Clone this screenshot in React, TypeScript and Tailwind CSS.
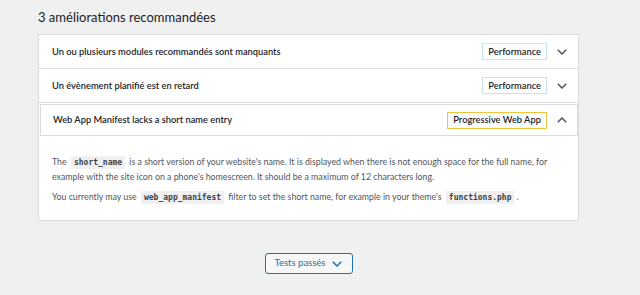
function Chevron({ up = false, className = '' }: { up?: boolean; className?: string }) {
  return (
    <svg
      width="10"
      height="6"
      viewBox="0 0 10 6"
      className={className}
      fill="none"
      stroke="currentColor"
      strokeWidth="1.5"
    >
      {up ? <path d="M0.8 5.3 L5 1 L9.2 5.3" /> : <path d="M0.8 0.7 L5 5 L9.2 0.7" />}
    </svg>
  );
}

const rows = [
  { id: 1, title: 'Un ou plusieurs modules recommandés sont manquants', badge: 'Performance' },
  { id: 2, title: 'Un évènement planifié est en retard', badge: 'Performance' },
];

function Code({ children }: { children: string }) {
  return (
    <code className="bg-[#f0f0f1] px-[3px] py-[2px] mx-[2px] text-[8px] font-bold text-[#3c434a] [font-family:'DejaVu_Sans_Mono',monospace]">
      {children}
    </code>
  );
}

export default function App() {
  return (
    <div className="w-[640px] h-[295px] bg-[#f0f0f1] pl-[38px] pt-[8px] [font-family:Lato,sans-serif] overflow-hidden">
      <h2 className="text-[13px] text-[#1d2327] leading-[18px] mb-[8px]">3 améliorations recommandées</h2>

      <div className="w-[541px] bg-white border border-[#dcdcde]">
        {rows.map((r) => (
          <div
            key={r.id}
            className="h-[34px] flex items-center justify-between pl-[13px] pr-[11px] border-b border-[#dcdcde]"
          >
            <span className="text-[9.3px] font-semibold text-[#1d2327]">{r.title}</span>
            <div className="flex items-center gap-[10px]">
              <span className="h-[17px] flex items-center px-[5px] border border-[#c5e3f2] text-[9.3px] font-semibold text-[#1d2327]">
                {r.badge}
              </span>
              <Chevron className="text-[#50575e]" />
            </div>
          </div>
        ))}

        <div className="pt-[1px]">
          <div className="ml-[1px] h-[32px] flex items-center justify-between pl-[12px] pr-[10px] border border-[#dcdcde]">
            <span className="text-[9.3px] font-semibold text-[#1d2327]">Web App Manifest lacks a short name entry</span>
            <div className="flex items-center gap-[10px]">
              <span className="h-[17px] flex items-center px-[5px] border border-[#f0c33c] text-[9.3px] font-semibold text-[#1d2327]">
                Progressive Web App
              </span>
              <Chevron up className="text-[#50575e]" />
            </div>
          </div>
        </div>

        <div className="px-[13px] pt-[19px] pb-[15px] text-[8.8px] text-[#50575e] leading-[14px] whitespace-nowrap">
          <p>
            The <Code>short_name</Code> is a short version of your website's name. It is displayed when there is not enough space for the full name, for
            <br />
            example with the site icon on a phone's homescreen. It should be a maximum of 12 characters long.
          </p>
          <p className="mt-[6px]">
            You currently may use <Code>web_app_manifest</Code> filter to set the short name, for example in your theme's <Code>functions.php</Code>.
          </p>
        </div>
      </div>

      <div className="w-[541px] flex justify-center mt-[32px]">
        <button className="h-[21px] w-[88px] flex items-center justify-center gap-[7px] border border-[#2271b1] rounded-[3px] bg-[#f6f7f7] text-[#2271b1] text-[9.5px]">
          Tests passés
          <Chevron className="text-[#2271b1]" />
        </button>
      </div>
    </div>
  );
}
